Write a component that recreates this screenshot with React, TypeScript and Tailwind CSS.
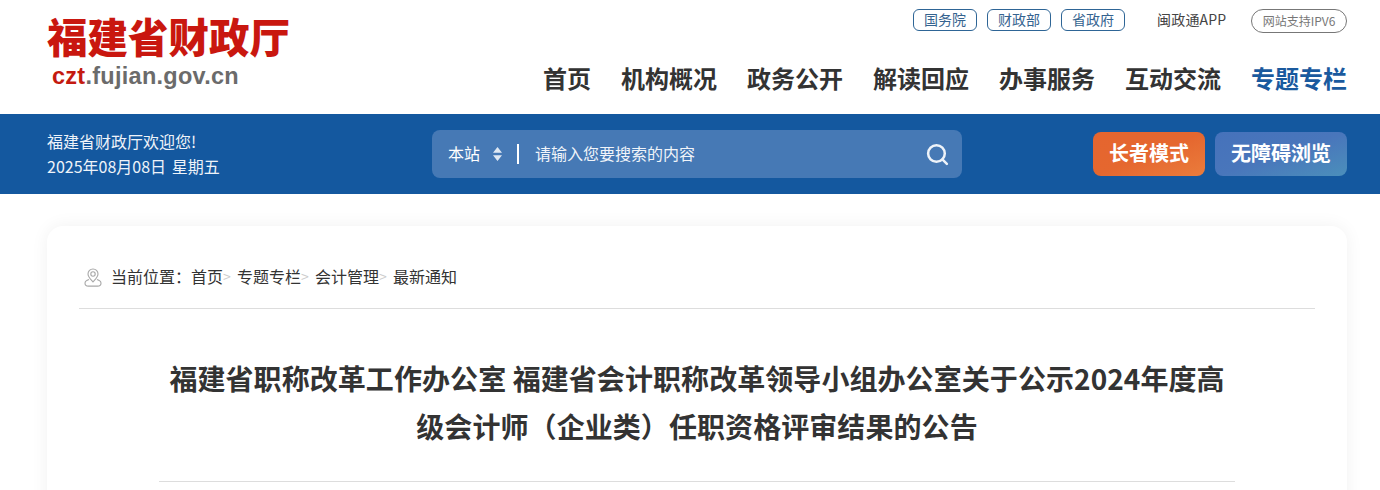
import { Search } from 'lucide-react'

const FONT = 'font-["Microsoft_YaHei","Noto_Sans_CJK_SC","Liberation_Sans",sans-serif]'

const NAV = ['首页', '机构概况', '政务公开', '解读回应', '办事服务', '互动交流', '专题专栏']
const TOP_LINKS = ['国务院', '财政部', '省政府']
const CRUMBS = ['首页', '专题专栏', '会计管理']

function PinIcon() {
  return (
    <svg width="18" height="19" viewBox="0 0 18 19" fill="none" stroke="#a8a8a8" strokeWidth="1.1">
      <path d="M9 14C6.4 11 4 8.8 4 6a5 5 0 0 1 10 0C14 8.8 11.6 11 9 14Z" />
      <circle cx="9" cy="6" r="2.2" />
      <path d="M5 11.6C2.6 12.4 1 13.6 1 15.2c0 1.7 1.6 2.9 3.4 2.9h9.2c1.8 0 3.4-1.2 3.4-2.9 0-1.6-1.6-2.8-4-3.6" />
    </svg>
  )
}

function Header() {
  return (
    <div className="h-[114px] bg-white pl-[47px] pr-[33px] flex justify-between">
      <div className="pt-[12px]">
        <div className="text-[40.5px] leading-[48px] font-black text-[#c9170f] whitespace-nowrap">福建省财政厅</div>
        <div className="ml-[5px] mt-[1px] text-[23.5px] leading-[30px] font-bold font-['Liberation_Sans',sans-serif] text-[#6b6b6b] tracking-[0.27px]">
          <span className="text-[#c41a10]">czt</span>.fujian.gov.cn
        </div>
      </div>
      <div className="flex flex-col items-end">
        <div className="flex items-start mt-[9px] h-[24px] text-[14px]">
          <div className="flex gap-[10px]">
            {TOP_LINKS.map(t => (
              <span key={t} className="w-[64px] h-[22px] pb-[2px] flex items-center justify-center rounded-[6px] border border-[#2e6596] text-[#35638f] leading-none">
                {t}
              </span>
            ))}
          </div>
          <span className="ml-[32px] h-[22px] w-[71px] pb-[2px] flex items-center text-[#444444] leading-none tracking-[0.2px] whitespace-nowrap">闽政通APP</span>
          <span className="ml-[23px] w-[96px] h-[24px] pb-[1px] flex items-center justify-center rounded-full border border-[#777777] text-[#777777] text-[12px] leading-none">
            网站支持IPV6
          </span>
        </div>
        <div className="flex gap-[30px] mt-[29px] text-[24px] leading-[32px] font-bold text-[#333333]">
          {NAV.map(n => (
            <span key={n} className={n === '专题专栏' ? 'text-[#1a5a9e]' : ''}>{n}</span>
          ))}
        </div>
      </div>
    </div>
  )
}

function Toolbar() {
  return (
    <div className="h-[80px] bg-[#14589f] pl-[47px] pr-[33px] flex items-center text-white">
      <div className="w-[385px] text-[16px] leading-[25px] text-[#eef3f9]">
        <div>福建省财政厅欢迎您!</div>
        <div>2025年08月08日 <span className="ml-[2px]">星期五</span></div>
      </div>
      <div className="w-[530px] h-[48px] rounded-[8px] bg-[#4679b5] flex items-center pl-[16px] pr-[12px] text-[16px]">
        <span className="leading-none pb-[3px]">本站</span>
        <svg className="ml-[13px]" width="9" height="14" viewBox="0 0 9 14" fill="#dfe8f3">
          <path d="M4.5 0 9 5.8H0ZM4.5 14 0 8.2h9Z" />
        </svg>
        <span className="ml-[15px] w-[2px] h-[20px] bg-white" />
        <span className="ml-[16px] pb-[3px] leading-none text-[#f0f4f9]">请输入您要搜索的内容</span>
        <Search className="ml-auto text-[#eef3f9]" size={25} strokeWidth={2.4} />
      </div>
      <div className="ml-auto flex gap-[10px] text-[20px] font-bold">
        <span className="w-[112px] h-[44px] pb-[2px] rounded-[8px] bg-gradient-to-br from-[#e5652f] via-[#e5672f] to-[#ea7c3c] flex items-center justify-center leading-none">
          长者模式
        </span>
        <span className="w-[132px] h-[44px] pb-[2px] rounded-[8px] bg-gradient-to-br from-[#4672bb] via-[#4976bb] to-[#4b8fbb] flex items-center justify-center leading-none">
          无障碍浏览
        </span>
      </div>
    </div>
  )
}

function Article() {
  return (
    <div className="ml-[47px] mr-[33px] mt-[32px] h-[400px] rounded-[16px] bg-white shadow-[0_0_18px_rgba(0,0,0,0.06)] px-[32px]">
      <div className="h-[83px] border-b border-[#dddddd] flex items-end pb-[21px] pl-[5px] text-[16px] leading-[18px] text-[#333333]">
        <PinIcon />
        <span className="ml-[9px] -translate-y-[2px]">当前位置：</span>
        {CRUMBS.map(c => (
          <span key={c} className="flex items-center -translate-y-[2px]">
            {c}
            <span className="w-[14px] text-[14px] text-[#cccccc]">&gt;</span>
          </span>
        ))}
        <span className="-translate-y-[2px]">最新通知</span>
      </div>
      <div className="mx-[80px] border-b border-[#dddddd] h-[173px] pt-[45px] text-center text-[28px] leading-[48px] font-bold tracking-[0.07px] text-[#333333]">
        福建省职称改革工作办公室 福建省会计职称改革领导小组办公室关于公示2024年度高级会计师（企业类）任职资格评审结果的公告
      </div>
    </div>
  )
}

export default function App() {
  return (
    <div className={`h-[490px] overflow-hidden bg-white ${FONT}`}>
      <Header />
      <Toolbar />
      <Article />
    </div>
  )
}
